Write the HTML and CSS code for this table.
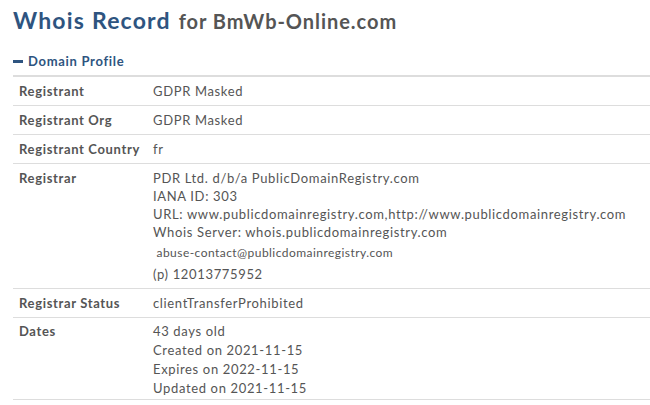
FILE: index.html
```html
<!DOCTYPE html>
<html>
<head>
<meta charset="utf-8">
<link rel="stylesheet" href="styles.css">
</head>
<body>
<div class="page">
  <h1 class="title"><span class="title-main">Whois Record</span> <span class="title-sub">for BmWb-Online.com</span></h1>
  <div class="section-head"><span class="minus"></span>Domain Profile</div>
  <div class="table">
    <div class="row"><div class="label">Registrant</div><div class="value">GDPR Masked</div></div>
    <div class="row"><div class="label">Registrant Org</div><div class="value">GDPR Masked</div></div>
    <div class="row"><div class="label">Registrant Country</div><div class="value">fr</div></div>
    <div class="row"><div class="label">Registrar</div><div class="value">
      <div>PDR Ltd. d/b/a PublicDomainRegistry.com</div>
      <div>IANA ID: 303</div>
      <div>URL: www.publicdomainregistry.com,http://www.publicdomainregistry.com</div>
      <div>Whois Server: whois.publicdomainregistry.com</div>
      <div class="abuse">&nbsp;abuse-contact@publicdomainregistry.com</div>
      <div>(p) 12013775952</div>
    </div></div>
    <div class="row"><div class="label">Registrar Status</div><div class="value">clientTransferProhibited</div></div>
    <div class="row row-dates"><div class="label">Dates</div><div class="value">
      <div>43 days old</div>
      <div>Created on 2021-11-15</div>
      <div>Expires on 2022-11-15</div>
      <div>Updated on 2021-11-15</div>
    </div></div>
  </div>
</div>
</body>
</html>
```

FILE: styles.css
```css
html, body {
  margin: 0;
  padding: 0;
  background: #fff;
}
body {
  font-family: Lato, "Open Sans", sans-serif;
  color: #555;
  overflow: hidden;
}
.page {
  padding: 0 0 0 13px;
}
.title {
  margin: 0;
  padding-top: 1px;
  height: 43px;
  line-height: 32px;
  font-weight: 700;
  white-space: nowrap;
}
.title-main {
  font-size: 23px;
  letter-spacing: 1.2px;
  color: #2e5480;
}
.title-sub {
  font-size: 20px;
  letter-spacing: 0.95px;
  color: #555;
}
.section-head {
  margin-top: 8px;
  font-size: 13px;
  font-weight: 700;
  letter-spacing: 0.7px;
  color: #2e5480;
  line-height: 18px;
  padding-bottom: 5px;
  border-bottom: 2px solid #ddd;
  display: flex;
  align-items: center;
}
.minus {
  display: inline-block;
  width: 10px;
  height: 3px;
  background: #2e5480;
  margin-right: 5px;
}
.row {
  display: grid;
  grid-template-columns: 134px 1fr;
  border-bottom: 1px solid #ddd;
  font-size: 13px;
  line-height: 18px;
  letter-spacing: 0.65px;
}
.label {
  font-weight: 700;
  padding: 5px 6px;
  white-space: nowrap;
}
.value {
  padding: 5px 6px;
  white-space: nowrap;
}
.abuse {
  font-size: 12px;
  letter-spacing: 0.45px;
  line-height: 24px;
}
.row-dates .label {
  padding-top: 4px;
}
.row-dates .value {
  line-height: 19px;
  padding-top: 4px;
  padding-bottom: 1px;
}
```
